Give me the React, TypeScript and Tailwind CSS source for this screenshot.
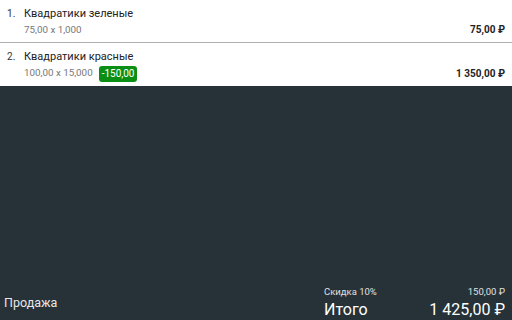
import React from 'react';

interface Item {
    name: string;
    qty: string;
    discount?: string;
    total: string;
}

const items: Item[] = [
    { name: 'Квадратики зеленые', qty: '75,00 x 1,000', total: '75,00 ₽' },
    { name: 'Квадратики красные', qty: '100,00 x 15,000', discount: '-150,00', total: '1 350,00 ₽' },
];

const App: React.FC = () => {
    return (
        <div className="w-[512px] h-[320px] flex flex-col bg-[#263238] font-['Roboto',sans-serif] overflow-hidden">
            <div className="bg-white">
                {items.map((item, i) => (
                    <div key={i} className={`flex h-[43px] ${i === 0 ? 'border-b border-[#b0b0b0]' : ''}`}>
                        <div className="w-[24px] pl-[7px] pt-[6px] text-[10px] leading-[15px] text-[#333]">{i + 1}.</div>
                        <div className="flex-1 flex flex-col pt-[6px]">
                            <div className="text-[11px] leading-[15px] text-[#222]">{item.name}</div>
                            <div className="flex items-center gap-[6px] mt-[1px] h-[17px]">
                                <span className="text-[9.8px] text-[#777]">{item.qty}</span>
                                {item.discount && (
                                    <span className="bg-[#0a8f14] text-white text-[10px] leading-[16px] px-[3px] rounded-[3px]">{item.discount}</span>
                                )}
                            </div>
                        </div>
                        <div className="flex items-end pb-[5px] pr-[7px] text-[10px] font-bold text-[#222]">{item.total}</div>
                    </div>
                ))}
            </div>
            <div className="flex-1" />
            <div className="flex items-end">
                <div className="flex-1 pl-[4px] pb-[7px] text-[12.5px] text-[#e8e8e8]">Продажа</div>
                <div className="w-[188px] pr-[7px] flex flex-col">
                    <div className="flex justify-between text-[9.5px] text-[#e0e0e0] leading-[14px]">
                        <span>Скидка 10%</span>
                        <span>150,00 ₽</span>
                    </div>
                    <div className="flex justify-between text-[16px] text-white leading-[21px]">
                        <span>Итого</span>
                        <span>1 425,00 ₽</span>
                    </div>
                </div>
            </div>
        </div>
    );
};

export default App;
